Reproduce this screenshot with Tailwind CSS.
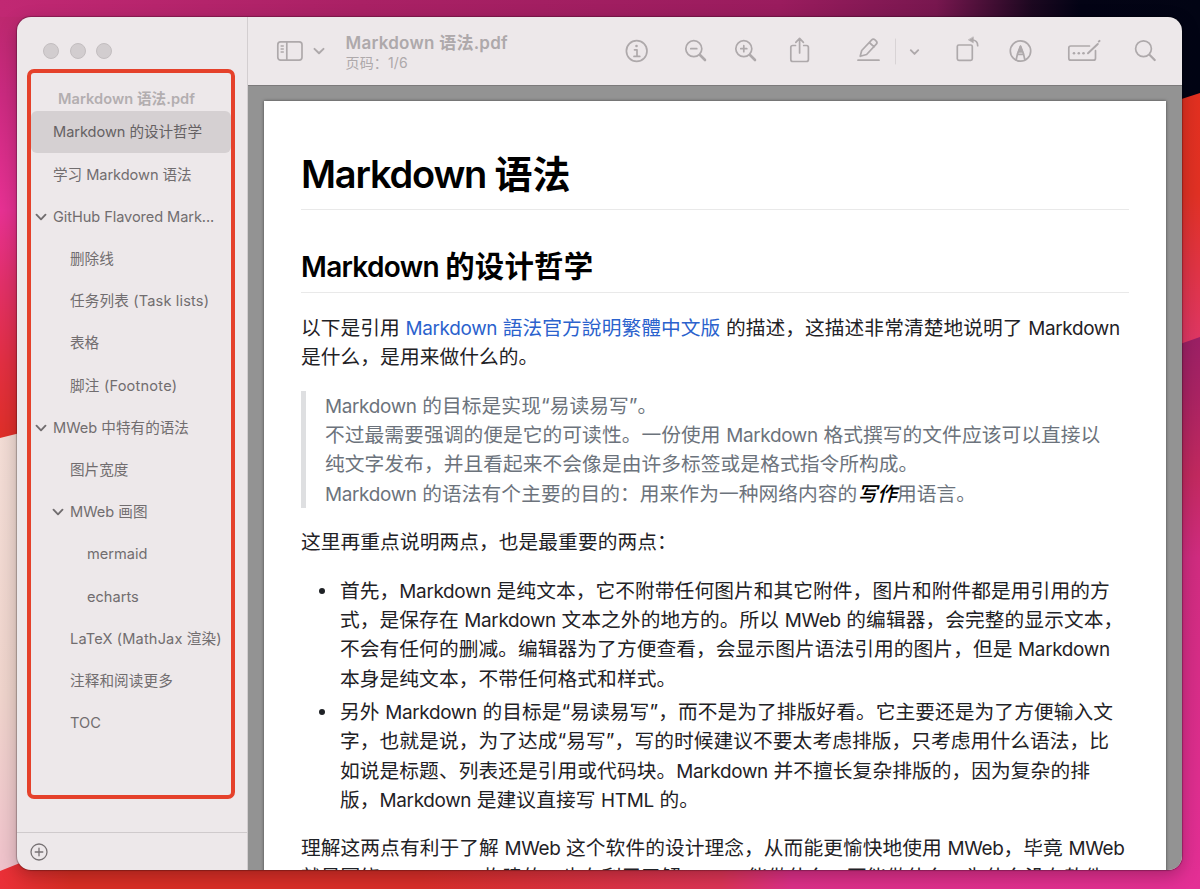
<!DOCTYPE html>
<html lang="zh-CN">

<head>
  <meta charset="UTF-8">
  <meta name="viewport" content="width=device-width, initial-scale=1.0">
  <title>Markdown 语法.pdf</title>
  <script src="https://cdn.jsdelivr.net/npm/@tailwindcss/browser@4"></script>
</head>

<body class="relative h-[889px] w-[1200px] overflow-hidden bg-[#d92c84] font-['Inter','Noto_Sans_CJK_SC',sans-serif] [text-spacing-trim:space-all]">
  <!-- Desktop wallpaper -->
  <svg class="absolute inset-0 -z-0" width="1200" height="889" viewBox="0 0 1200 889">
    <defs>
      <linearGradient id="top"><stop offset="0" stop-color="#c12873"/><stop offset=".3" stop-color="#aa2165"/><stop offset=".65" stop-color="#9a1c5e"/><stop offset=".78" stop-color="#78174f"/><stop offset=".86" stop-color="#1c0820"/><stop offset=".9" stop-color="#030315"/><stop offset="1" stop-color="#020414"/></linearGradient>
      <linearGradient id="left" x1="0" y1="0" x2="0" y2="1"><stop offset="0" stop-color="#bd286f"/><stop offset=".18" stop-color="#cb2a80"/><stop offset=".45" stop-color="#e73193"/><stop offset=".62" stop-color="#e23069"/><stop offset=".8" stop-color="#e22f43"/><stop offset="1" stop-color="#df2f25"/></linearGradient>
      <linearGradient id="pale" x1="0" y1="0" x2="0" y2="1"><stop offset="0" stop-color="#f3ddd6"/><stop offset=".6" stop-color="#efd4cc"/><stop offset="1" stop-color="#efc2cb"/></linearGradient>
      <linearGradient id="bottom"><stop offset="0" stop-color="#ea3038"/><stop offset=".06" stop-color="#d92e24"/><stop offset=".35" stop-color="#d92e29"/><stop offset=".6" stop-color="#dc3455"/><stop offset=".66" stop-color="#dc2f88"/><stop offset="1" stop-color="#e42f92"/></linearGradient>
      <linearGradient id="red" x1="0" y1="0" x2="0" y2="1"><stop offset="0" stop-color="#e23020"/><stop offset=".4" stop-color="#e13124"/><stop offset="1" stop-color="#df3766"/></linearGradient>
      <linearGradient id="right" x1="0" y1="0" x2="0" y2="1"><stop offset="0" stop-color="#9b2065"/><stop offset=".1" stop-color="#a92363"/><stop offset=".25" stop-color="#c2295f"/><stop offset=".4" stop-color="#d02c80"/><stop offset="1" stop-color="#e42f95"/></linearGradient>
    </defs>
    <rect width="1200" height="100" fill="url(#top)"/>
    <rect y="17" width="40" height="430" fill="url(#left)"/>
    <path d="M0 438L40 428V860L0 872Z" fill="url(#pale)"/>
    <path d="M0 871L40 855H1200V889H0Z" fill="url(#bottom)"/>
    <path d="M1160 106L1200 93V345H1160Z" fill="url(#red)"/>
    <path d="M1160 351L1200 337V889H1160Z" fill="url(#right)"/>
  </svg>

  <!-- Preview window -->
  <main class="relative mt-[17px] ml-[17px] flex h-[853px] w-[1165px] overflow-hidden rounded-[14px] bg-[#ede8ea] shadow-[0_0_1px_1px_rgba(0,0,0,0.25),0_6px_18px_rgba(0,0,0,0.25)]">
    <!-- Sidebar -->
    <aside class="flex w-[231px] shrink-0 flex-col border-r border-[#d3ced0] text-[14.6px] text-[#716d6f]">
      <div class="flex h-[52px] shrink-0 gap-[10.5px] pt-[26px] pl-[26px]">
        <span class="size-4 rounded-full border border-[#c3bec0] bg-[#d2cdcf]"></span>
        <span class="size-4 rounded-full border border-[#c3bec0] bg-[#d2cdcf]"></span>
        <span class="size-4 rounded-full border border-[#c3bec0] bg-[#d2cdcf]"></span>
      </div>
      <div class="relative mx-[10px] h-[730px] shrink-0 pt-[20px] pl-1 whitespace-nowrap">
        <div class="h-[22px] pl-[27px] text-[14.6px] leading-[21px] font-semibold tracking-[0.05px] text-[#b3aeb0]">Markdown 语法.pdf</div>
        <ul class="w-[200px] leading-[42.2px]">
          <li class="flex h-[42.2px] items-center rounded-md bg-[#d5d0d2] pl-[22px] tracking-[-0.05px] text-[#656163]">Markdown 的设计哲学</li>
          <li class="flex h-[42.2px] items-center pt-px pl-[22px] tracking-[-0.05px]">学习 Markdown 语法</li>
          <li class="flex h-[42.2px] items-center gap-[6px] pt-px pl-[4px] tracking-[-0.08px]">
            <svg class="h-3 w-3" viewBox="0 0 12 12" fill="none" stroke="currentColor" stroke-width="1.9" stroke-linecap="round" stroke-linejoin="round"><path d="M1.5 3.7L6 8.3L10.500 3.7"/></svg>
            <span>GitHub Flavored Mark...</span>
          </li>
          <li class="flex h-[42.2px] items-center pl-[39px]">删除线</li>
          <li class="flex h-[42.2px] items-center pl-[39px] tracking-[0.15px]">任务列表 (Task lists)</li>
          <li class="flex h-[42.2px] items-center pt-px pl-[39px]">表格</li>
          <li class="flex h-[42.2px] items-center pt-px pl-[39px] tracking-[0.2px]">脚注 (Footnote)</li>
          <li class="flex h-[42.2px] items-center gap-[6px] pt-px pl-[4px]">
            <svg class="h-3 w-3" viewBox="0 0 12 12" fill="none" stroke="currentColor" stroke-width="1.9" stroke-linecap="round" stroke-linejoin="round"><path d="M1.5 3.7L6 8.3L10.500 3.7"/></svg>
            <span>MWeb 中特有的语法</span>
          </li>
          <li class="flex h-[42.2px] items-center pl-[39px]">图片宽度</li>
          <li class="flex h-[42.2px] items-center gap-[6px] pl-[21px]">
            <svg class="h-3 w-3" viewBox="0 0 12 12" fill="none" stroke="currentColor" stroke-width="1.9" stroke-linecap="round" stroke-linejoin="round"><path d="M1.5 3.7L6 8.3L10.500 3.7"/></svg>
            <span>MWeb 画图</span>
          </li>
          <li class="flex h-[42.2px] items-center pl-[56px]">mermaid</li>
          <li class="flex h-[42.2px] items-center pt-px pl-[56px]">echarts</li>
          <li class="flex h-[42.2px] items-center pt-px pl-[39px] tracking-[0.15px]">LaTeX (MathJax 渲染)</li>
          <li class="flex h-[42.2px] items-center pt-px pl-[39px] tracking-[0.1px]">注释和阅读更多</li>
          <li class="flex h-[42.2px] items-center pl-[39px]">TOC</li>
        </ul>
        <!-- Highlight frame around the outline -->
        <div class="pointer-events-none absolute top-0 left-0 h-[730px] w-[208px] rounded-[7px] border-4 border-[#e5412b]"></div>
      </div>
      <div class="mt-auto flex h-[38px] items-center border-t border-[#cfcacc] pl-[12px]">
        <svg class="size-5" viewBox="0 0 20 20" fill="none" stroke="#777274" stroke-width="1.3" stroke-linecap="round"><circle cx="10" cy="10" r="8"/><path d="M10 6.200v7.600M6.200 10h7.600"/></svg>
      </div>
    </aside>

    <section class="flex min-w-0 flex-1 flex-col">
      <!-- Toolbar -->
      <header class="flex h-[69px] shrink-0 border-b border-[#7c7a7b] text-[#aea9ab]">
        <svg class="mt-[23px] ml-[28px] h-[22px] w-[28px]" viewBox="0 0 28 22" fill="none" stroke="currentColor" stroke-width="1.700"><rect x="1.800" y="1.900" width="24.200" height="18.200" rx="2.800"/><path d="M10.800 2v18"/><path d="M4.600 6h3.200M4.600 9h3.200M4.600 12h3.200" stroke-width="1.300"/></svg>
        <svg class="mt-[28px] ml-[9px] h-3 w-3" viewBox="0 0 12 12" fill="none" stroke="currentColor" stroke-width="2" stroke-linecap="round" stroke-linejoin="round"><path d="M1.500 3.900L6 8.200L10.500 3.900"/></svg>
        <div class="mt-[15px] ml-[20.5px] w-[190.5px] whitespace-nowrap">
          <div class="text-[17px] leading-[22px] font-semibold tracking-[0.25px]">Markdown 语法.pdf</div>
          <div class="text-[14px] leading-[17px] tracking-[0.15px]">页码：1/6</div>
        </div>
        <svg class="mt-[14px] ml-[69px] h-[40px] w-[560px]" viewBox="605 31 560 40" fill="none" stroke="currentColor" stroke-width="1.700" stroke-linecap="round" stroke-linejoin="round">
          <!-- info -->
          <circle cx="636.700" cy="51" r="10.300"/><circle cx="636.500" cy="46" r="1.300" fill="currentColor" stroke="none"/><path d="M634.500 49.800h2.500v6.400M634 56.400h5.800"/>
          <!-- zoom out, zoom in -->
          <circle cx="693.800" cy="48.700" r="8"/><path d="M690.800 48.700h6"/><path d="M700 55l5 5" stroke-width="2.600"/>
          <circle cx="743.800" cy="48.700" r="8"/><path d="M740.800 48.700h6M743.800 45.700v6"/><path d="M750 55l5 5" stroke-width="2.600"/>
          <!-- share -->
          <path d="M795.500 45.500h-2.700a2 2 0 0 0-2 2v12a2 2 0 0 0 2 2h13.600a2 2 0 0 0 2-2v-12a2 2 0 0 0-2-2h-2.700M799.600 53v-14M795.800 42.300l3.800-3.900l3.800 3.900"/>
          <!-- pencil -->
          <path d="M858 60.200h21"/><path d="M860.200 56.300l1.500-5.800l9.800-10.400q1.700-1.700 3.500-.2l1 .9q1.800 1.600.3 3.400l-9.700 10.300l-6.400 1.800M869.300 42.500l4.800 4.400"/>
          <path d="M895.500 39v25" stroke="#d8d3d5" stroke-width="1"/>
          <path d="M910.800 50.200l3.700 3.700l3.700-3.700" stroke-width="1.900"/>
          <!-- rotate -->
          <rect x="957.300" y="45" width="15" height="15.300" rx="1.500"/><path d="M972 40q5.700.2 5.700 5.700"/><path d="M973.300 37.200v5.600l-4.700-2.800z" fill="currentColor" stroke-width=".6"/>
          <!-- markup -->
          <circle cx="1020.500" cy="51" r="10.200"/><path d="M1016.200 59.700l1.300-6l3-7.600l3 7.600l1.300 6M1017.500 54.300h6"/><path d="M1018.500 52l2-5.500l2 5.500z" fill="currentColor"/>
          <!-- fill in form -->
          <path d="M1089.500 46h-18.700a2 2 0 0 0-2 2v10.200a2 2 0 0 0 2 2h22.700a2 2 0 0 0 2-2v-7.500"/><path d="M1088 53.200l9.800-9.200M1098.800 41.500l.7-.6" stroke-width="2"/><g fill="currentColor" stroke="none"><circle cx="1074" cy="53.200" r="1.300"/><circle cx="1078.800" cy="53.200" r="1.300"/><circle cx="1083.500" cy="53.200" r="1.300"/></g>
          <!-- search -->
          <circle cx="1143.500" cy="48.700" r="7.900"/><path d="M1149.700 55l5 5" stroke-width="2.300"/>
        </svg>
      </header>

      <!-- Document -->
      <div class="min-h-0 flex-1 overflow-hidden bg-[#939393] pt-[15px] pl-[16px]">
        <article class="h-[900px] w-[902px] bg-white px-[37px] pt-[45px] text-[19.73px] leading-[29.33px] tracking-[0.06px] whitespace-nowrap text-[#1f2226] shadow-[0_0_3px_rgba(0,0,0,0.5)] [&_span]:text-[18.9px] [&_span]:tracking-[-0.32px]">
          <h1 class="h-[64px] border-b border-[#e9e9e9] text-[38px] leading-[56px] font-semibold text-black"><b class="font-semibold tracking-[-1.2px]">Markdown </b>语法</h1>
          <h2 class="mt-[38px] h-[45px] border-b border-[#e9e9e9] text-[29.4px] leading-[37px] font-semibold tracking-[0.2px] text-black"><b class="text-[28px] font-semibold tracking-[-0.7px]">Markdown </b>的设计哲学</h2>
          <p class="mt-[21px]">以下是引用 <a class="text-[#2b62cd]"><span>Markdown</span> 語法官方說明繁體中文版</a> 的描述，这描述非常清楚地说明了 <span>Markdown</span><br>是什么，是用来做什么的。</p>
          <blockquote class="mt-[18px] border-l-[5px] border-[#dedfe1] pl-[19px] text-[#6c737c]"><div class="relative top-px"><span>Markdown</span> 的目标是实现“易读易写”。<br>不过最需要强调的便是它的可读性。一份使用 <span>Markdown</span> 格式撰写的文件应该可以直接以<br>纯文字发布，并且看起来不会像是由许多标签或是格式指令所构成。<br><span>Markdown</span> 的语法有个主要的目的：用来作为一种网络内容的<em class="font-medium text-black">写作</em>用语言。</div></blockquote>
          <p class="mt-[20.5px]">这里再重点说明两点，也是最重要的两点：</p>
          <ul class="mt-[19px] flex flex-col gap-1">
            <li class="flex"><i class="mt-[11px] mr-[15px] ml-[18px] size-[6px] shrink-0 rounded-full bg-[#1f2226]"></i>
              <div>首先，<span>Markdown</span> 是纯文本，它不附带任何图片和其它附件，图片和附件都是用引用的方<br>式，是保存在 <span>Markdown</span> 文本之外的地方的。所以 <span>MWeb</span> 的编辑器，会完整的显示文本，<br>不会有任何的删减。编辑器为了方便查看，会显示图片语法引用的图片，但是 <span>Markdown</span><br>本身是纯文本，不带任何格式和样式。</div>
            </li>
            <li class="flex"><i class="mt-[11px] mr-[15px] ml-[18px] size-[6px] shrink-0 rounded-full bg-[#1f2226]"></i>
              <div>另外 <span>Markdown</span> 的目标是“易读易写”，而不是为了排版好看。它主要还是为了方便输入文<br>字，也就是说，为了达成“易写”，写的时候建议不要太考虑排版，只考虑用什么语法，比<br>如说是标题、列表还是引用或代码块。<span>Markdown</span> 并不擅长复杂排版的，因为复杂的排<br>版，<span>Markdown</span> 是建议直接写 <span>HTML</span> 的。</div>
            </li>
          </ul>
          <p class="mt-[18.5px]">理解这两点有利于了解 <span>MWeb</span> 这个软件的设计理念，从而能更愉快地使用 <span>MWeb</span>，毕竟 <span>MWeb</span><br>就是围绕 <span>Markdown</span> 构建的。也有利于了解 <span>MWeb</span> 能做什么，不能做什么，为什么没有软件</p>
        </article>
      </div>
    </section>
  </main>
</body>

</html>
